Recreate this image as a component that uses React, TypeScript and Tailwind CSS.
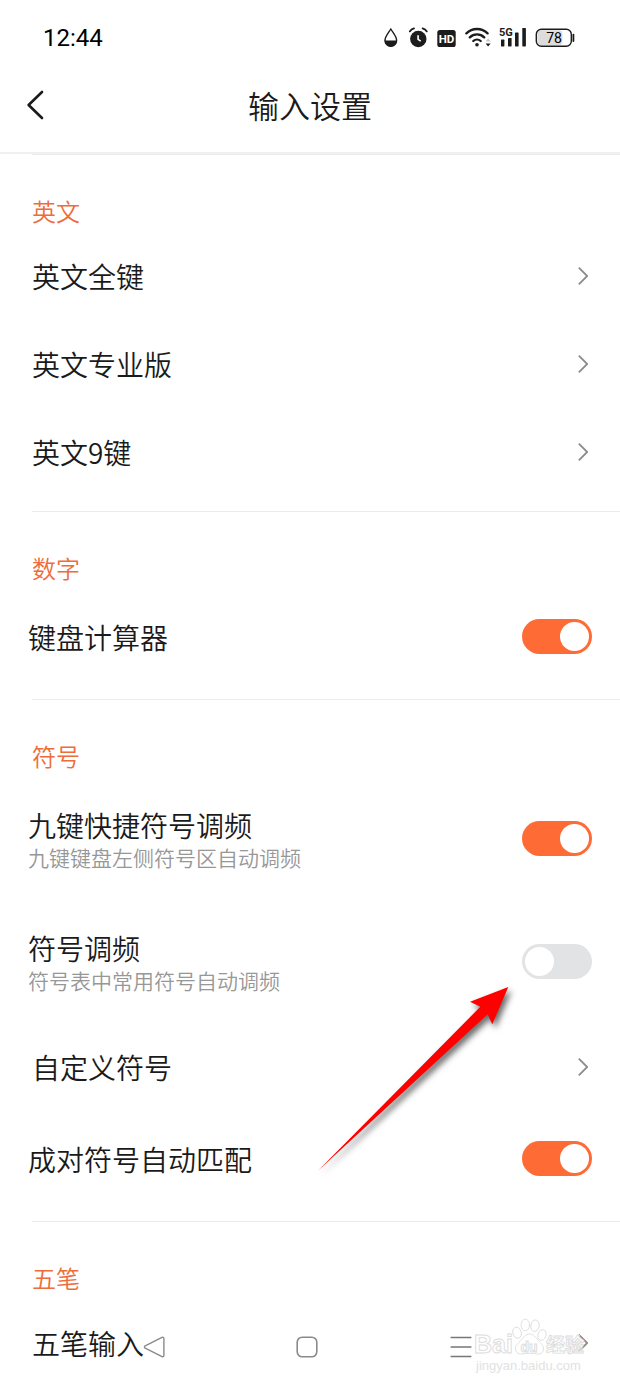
import React, { useState } from 'react';

interface NavItem {
  kind: 'nav';
  label: string;
}

interface SwitchItem {
  kind: 'switch';
  label: string;
  note?: string;
  on: boolean;
}

interface SettingSection {
  title: string;
  items: (NavItem | SwitchItem)[];
}

const sections: SettingSection[] = [
  {
    title: '英文',
    items: [
      { kind: 'nav', label: '英文全键' },
      { kind: 'nav', label: '英文专业版' },
      { kind: 'nav', label: '英文9键' },
    ],
  },
  {
    title: '数字',
    items: [{ kind: 'switch', label: '键盘计算器', on: true }],
  },
  {
    title: '符号',
    items: [
      { kind: 'switch', label: '九键快捷符号调频', note: '九键键盘左侧符号区自动调频', on: true },
      { kind: 'switch', label: '符号调频', note: '符号表中常用符号自动调频', on: false },
      { kind: 'nav', label: '自定义符号' },
      { kind: 'switch', label: '成对符号自动匹配', on: true },
    ],
  },
  {
    title: '五笔',
    items: [{ kind: 'nav', label: '五笔输入' }],
  },
];

function StatusBar() {
  return (
    <div className="flex h-[60px] shrink-0 items-center justify-between pt-4 pl-[43px] pr-[45px] font-[Roboto,sans-serif] font-normal text-[#1c1c1c]">
      <span className="text-2xl text-black">12:44</span>
      <div className="flex items-center gap-2">
        <svg width="16" height="24" viewBox="0 0 16 24">
          <path d="M6.8 3C4.6 6.6 1 10.2 1 14.4a5.8 5.8 0 0 0 11.6 0C12.6 10.2 9 6.6 6.8 3z" fill="none" stroke="currentColor" strokeWidth="1.4" />
          <path d="M.6 14.5h12.4a6.2 6.2 0 0 1-12.4 0z" fill="currentColor" />
        </svg>
        <svg width="21" height="24" viewBox="0 0 21 24" fill="none">
          <circle cx="10.3" cy="13" r="8.2" fill="currentColor" />
          <path d="M1.8 5.4Q3.2 3.2 6 2.3M14.6 2.3q2.8.9 4.2 3.1" stroke="currentColor" strokeWidth="1.8" strokeLinecap="round" />
          <path d="M10.1 9.2v4.2l2.6 1.8" stroke="white" strokeWidth="1.6" />
        </svg>
        <svg width="20" height="24" viewBox="0 0 20 24">
          <rect x=".3" y="4" width="18.4" height="17" rx="2.6" fill="currentColor" />
          <text x="9.5" y="16.6" textAnchor="middle" fontSize="11.5" fontWeight="700" fill="white">HD</text>
        </svg>
        <svg width="26" height="24" viewBox="0 0 26 24" fill="none">
          <path d="M1.4 7.4a15 15 0 0 1 21.2 0M4.8 11.4a10.3 10.3 0 0 1 14.4 0M8.3 15a5.4 5.4 0 0 1 7.4 0" stroke="currentColor" strokeWidth="2.3" strokeLinecap="round" />
          <circle cx="12" cy="18.8" r="1.8" fill="currentColor" />
          <path d="M20.6 15.6h5L23.1 12.4z" fill="#c4c4c4" />
          <path d="M20.6 17.6h5l-2.5 3z" fill="currentColor" />
        </svg>
        <svg width="28" height="24" viewBox="0 0 28 24" fill="currentColor">
          <rect x="2" y="13.6" width="3.4" height="6.8" rx=".6" />
          <rect x="9" y="12" width="3.6" height="8.4" rx=".6" />
          <rect x="16" y="6.4" width="3.6" height="14" rx=".6" />
          <rect x="23.3" y="2" width="3.6" height="18.4" rx=".6" />
          <text x="0" y="10" fontSize="11" fontWeight="700">5G</text>
        </svg>
        <svg width="40" height="24" viewBox="0 0 40 24">
          <rect x="2.4" y="4.2" width="25" height="15" rx="3.6" fill="#dcdcdc" />
          <rect x="1.3" y="3.3" width="35" height="17" rx="5" fill="none" stroke="currentColor" strokeWidth="1.4" />
          <path d="M38.4 8.6v6.4" stroke="currentColor" strokeWidth="1.8" strokeLinecap="round" />
          <text x="19" y="16.8" textAnchor="middle" fontSize="14">78</text>
        </svg>
      </div>
    </div>
  );
}

function NavRow({ item }: { item: NavItem }) {
  return (
    <a href="#" className="flex h-[88px] items-center justify-between px-8">
      <span className="text-[28px] leading-9">{item.label}</span>
      <svg width="10" height="20" viewBox="0 0 10 20" fill="none" stroke="#8c8c8c" strokeWidth="1.8">
        <path d="M.8 1.6 9.2 10 .8 18.4" />
      </svg>
    </a>
  );
}

function SwitchRow({ item }: { item: SwitchItem }) {
  const [on, setOn] = useState(item.on);

  return (
    <label className={`flex items-center justify-between px-7 ${item.note ? 'h-[123px]' : 'h-[95px]'}`}>
      <span className="flex flex-col">
        <span className="text-[28px] leading-9">{item.label}</span>
        {item.note && <span className="text-[21px] leading-7 text-[#979797]">{item.note}</span>}
      </span>
      <input
        type="checkbox"
        role="switch"
        checked={on}
        onChange={(e) => setOn(e.target.checked)}
        className="flex h-[35px] w-[70px] shrink-0 appearance-none items-center rounded-full bg-[#e2e3e5] px-[3px] before:size-[29px] before:rounded-full before:bg-white before:content-[''] checked:justify-end checked:bg-[#ff6b35]"
      />
    </label>
  );
}

function Watermark() {
  return (
    <svg
      className="absolute right-[30px] bottom-3 font-['Liberation_Sans',sans-serif]"
      width="118"
      height="58"
      viewBox="0 0 118 58"
      stroke="#dcdcdc"
      strokeWidth=".9"
      fill="white"
      fillOpacity=".6"
    >
      <text x="2" y="37" fontSize="25" fontWeight="700">Bai</text>
      <ellipse cx="45" cy="16.7" rx="4.2" ry="5.6" transform="rotate(-18 45 16.7)" />
      <ellipse cx="53.3" cy="9" rx="4.2" ry="5.8" />
      <ellipse cx="63" cy="9.7" rx="4.2" ry="5.8" transform="rotate(10 63 9.7)" />
      <ellipse cx="70" cy="19" rx="4" ry="5.4" transform="rotate(20 70 19)" />
      <path d="M57.500 18c-4 0-6 3.400-8.500 6.400-2.800 3-5.800 4.800-5.500 8.600.4 4.200 4 5.400 7 4.900 4.500-.8 9.500-.8 14 0 3.500.6 6.700-.6 7-4.900.2-3.800-2.700-5.600-5.300-8.600C63.700 21.400 61.500 18 57.500 18z" />
      <text x="57" y="36" textAnchor="middle" fontSize="14" fontWeight="700">du</text>
      <text x="74" y="36" fontSize="19" fontWeight="700" fontFamily="'Noto Sans CJK SC', sans-serif">经验</text>
      <text x="4" y="54" fontSize="13" fontWeight="400" fill="#e2e2e2" stroke="none" fillOpacity="1">jingyan.baidu.com</text>
    </svg>
  );
}

function SystemNav() {
  return (
    <nav className="absolute inset-x-0 bottom-0 grid h-[78px] grid-cols-3 items-center justify-items-center pl-[77px] pr-[82px]">
      <button type="button" aria-label="返回">
        <svg width="22" height="22" viewBox="0 0 22 22" fill="none" stroke="#8a8a8a" strokeWidth="1.4" strokeLinejoin="round">
          <path d="M19 1.4 2.200 9.800q-1.600 1.200 0 2.400L19 20.600q1.900.6 1.900-1.400V2.800q0-2-1.900-1.400z" />
        </svg>
      </button>
      <button type="button" aria-label="主页">
        <svg width="22" height="22" viewBox="0 0 22 22" fill="none" stroke="#8a8a8a" strokeWidth="1.6">
          <rect x="1.200" y="1.200" width="19.600" height="19.600" rx="5" />
        </svg>
      </button>
      <button type="button" aria-label="最近任务">
        <svg width="22" height="22" viewBox="0 0 22 22" fill="none" stroke="#777777" strokeWidth="1.6">
          <path d="M.6 1.500h20.800M.6 11h20.800M.6 20.500h20.800" />
        </svg>
      </button>
    </nav>
  );
}

export default function App() {
  return (
    <div className="relative flex h-screen flex-col overflow-hidden bg-white font-['Noto_Sans_CJK_SC',sans-serif] font-[350] text-[#1a1a1a]">
      <StatusBar />

      <header className="grid h-[94px] shrink-0 grid-cols-[1fr_auto_1fr] items-center border-b-2 border-[#f0f0f0] px-6 pb-[3px]">
        <button type="button" aria-label="返回" className="justify-self-start">
          <svg width="22" height="30" viewBox="0 0 22 30" fill="none" stroke="#1a1a1a" strokeWidth="2.600" strokeLinecap="round" strokeLinejoin="round">
            <path d="M18 2 4.600 15 18 28" />
          </svg>
        </button>
        <h1 className="text-[31px] leading-10">输入设置</h1>
      </header>

      <main className="min-h-0 flex-1 overflow-hidden">
        {sections.map((section) => (
          <section key={section.title}>
            <div className="ml-8 h-px bg-[#ececec]" />
            <div className="pt-9 pb-[15px]">
              <h2 className="mb-px px-8 text-2xl leading-10 text-[#ee6c3c]">{section.title}</h2>
              {section.items.map((item) =>
                item.kind === 'nav' ? (
                  <NavRow key={item.label} item={item} />
                ) : (
                  <SwitchRow key={item.label} item={item} />
                )
              )}
            </div>
          </section>
        ))}
      </main>

      {/* pointer towards the symbol frequency switch */}
      <svg
        className="pointer-events-none absolute top-[980px] right-[100px] drop-shadow-[3px_4px_3px_rgba(0,0,0,0.6)]"
        width="210"
        height="200"
        viewBox="0 0 210 200"
      >
        <path d="M198.300 7 182.300 44.300 177.700 34.300 7.700 191 170.300 26.700 160 21.700z" fill="#ff0000" />
      </svg>

      <SystemNav />
      <Watermark />
    </div>
  );
}
